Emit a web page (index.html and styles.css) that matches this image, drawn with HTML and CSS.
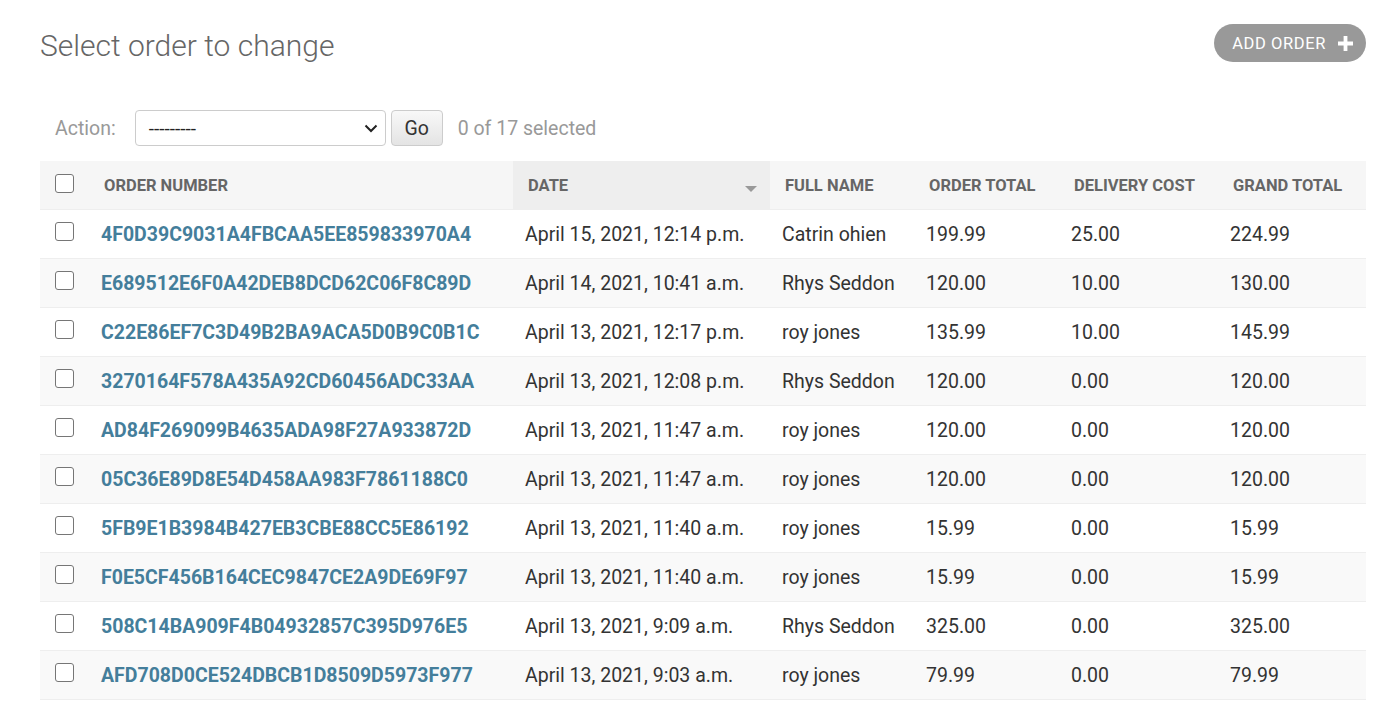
FILE: index.html
```html
<!DOCTYPE html>
<html lang="en">
<head>
<meta charset="utf-8">
<title>Select order to change</title>
<link rel="stylesheet" href="styles.css">
</head>
<body>
<div class="content">
  <div class="top">
    <h1 class="title">Select order to change</h1>
    <a class="addlink" href="#">ADD ORDER
      <svg class="plus" width="15" height="15" viewBox="0 0 15 15"><path d="M5.6 0h3.8v5.6H15v3.8H9.4V15H5.6V9.4H0V5.6h5.6z" fill="#fff"/></svg>
    </a>
  </div>
  <div class="actions">
    <span class="label">Action:</span>
    <div class="select">
      <span>---------</span>
      <svg width="14" height="9" viewBox="0 0 14 9"><path d="M1.5 1.5l5.5 5.5 5.5-5.5" fill="none" stroke="#222" stroke-width="2"/></svg>
    </div>
    <button class="go">Go</button>
    <span class="counter">0 of 17 selected</span>
  </div>
  <table class="result">
    <colgroup>
      <col class="c-check"><col class="c-num"><col class="c-date"><col class="c-name"><col class="c-total"><col class="c-deliv"><col class="c-grand">
    </colgroup>
    <thead>
      <tr>
        <th class="cb"><span class="box"></span></th>
        <th>ORDER NUMBER</th>
        <th class="sorted"><div class="sorthead"><span>DATE</span><span class="arrow"></span></div></th>
        <th>FULL NAME</th>
        <th>ORDER TOTAL</th>
        <th>DELIVERY COST</th>
        <th>GRAND TOTAL</th>
      </tr>
    </thead>
    <tbody>
      <tr><td class="cb"><span class="box"></span></td><td class="num"><a href="#">4F0D39C9031A4FBCAA5EE859833970A4</a></td><td>April 15, 2021, 12:14 p.m.</td><td>Catrin ohien</td><td>199.99</td><td>25.00</td><td>224.99</td></tr>
      <tr><td class="cb"><span class="box"></span></td><td class="num"><a href="#">E689512E6F0A42DEB8DCD62C06F8C89D</a></td><td>April 14, 2021, 10:41 a.m.</td><td>Rhys Seddon</td><td>120.00</td><td>10.00</td><td>130.00</td></tr>
      <tr><td class="cb"><span class="box"></span></td><td class="num"><a href="#">C22E86EF7C3D49B2BA9ACA5D0B9C0B1C</a></td><td>April 13, 2021, 12:17 p.m.</td><td>roy jones</td><td>135.99</td><td>10.00</td><td>145.99</td></tr>
      <tr><td class="cb"><span class="box"></span></td><td class="num"><a href="#">3270164F578A435A92CD60456ADC33AA</a></td><td>April 13, 2021, 12:08 p.m.</td><td>Rhys Seddon</td><td>120.00</td><td>0.00</td><td>120.00</td></tr>
      <tr><td class="cb"><span class="box"></span></td><td class="num"><a href="#">AD84F269099B4635ADA98F27A933872D</a></td><td>April 13, 2021, 11:47 a.m.</td><td>roy jones</td><td>120.00</td><td>0.00</td><td>120.00</td></tr>
      <tr><td class="cb"><span class="box"></span></td><td class="num"><a href="#">05C36E89D8E54D458AA983F7861188C0</a></td><td>April 13, 2021, 11:47 a.m.</td><td>roy jones</td><td>120.00</td><td>0.00</td><td>120.00</td></tr>
      <tr><td class="cb"><span class="box"></span></td><td class="num"><a href="#">5FB9E1B3984B427EB3CBE88CC5E86192</a></td><td>April 13, 2021, 11:40 a.m.</td><td>roy jones</td><td>15.99</td><td>0.00</td><td>15.99</td></tr>
      <tr><td class="cb"><span class="box"></span></td><td class="num"><a href="#">F0E5CF456B164CEC9847CE2A9DE69F97</a></td><td>April 13, 2021, 11:40 a.m.</td><td>roy jones</td><td>15.99</td><td>0.00</td><td>15.99</td></tr>
      <tr><td class="cb"><span class="box"></span></td><td class="num"><a href="#">508C14BA909F4B04932857C395D976E5</a></td><td>April 13, 2021, 9:09 a.m.</td><td>Rhys Seddon</td><td>325.00</td><td>0.00</td><td>325.00</td></tr>
      <tr><td class="cb"><span class="box"></span></td><td class="num"><a href="#">AFD708D0CE524DBCB1D8509D5973F977</a></td><td>April 13, 2021, 9:03 a.m.</td><td>roy jones</td><td>79.99</td><td>0.00</td><td>79.99</td></tr>
    </tbody>
  </table>
</div>
</body>
</html>
```
FILE: styles.css
```css
html, body {
  margin: 0;
  padding: 0;
  background: #fff;
}
body {
  font-family: Roboto, "Liberation Sans", sans-serif;
  color: #333;
  font-size: 19.5px;
}
.content {
  padding: 24px 30px 0 40px;
}
.top {
  display: flex;
  justify-content: space-between;
  align-items: flex-start;
  height: 76px;
}
.title {
  margin: 3px 0 0 0;
  font-size: 30px;
  font-weight: 300;
  color: #666;
  line-height: 38px;
}
.addlink {
  display: flex;
  align-items: center;
  gap: 12px;
  height: 38px;
  padding: 0 13px 0 18px;
  background: #999;
  border-radius: 19px;
  color: #fff;
  text-decoration: none;
  font-size: 16.5px;
  letter-spacing: 0.6px;
}
.plus { display: block; }
.actions {
  display: flex;
  align-items: center;
  height: 36px;
  padding: 10px 0 15px 15px;
}
.label {
  color: #999;
  margin-right: 19px;
}
.select {
  width: 251px;
  height: 36px;
  box-sizing: border-box;
  border: 1px solid #ccc;
  border-radius: 4px;
  display: flex;
  align-items: center;
  justify-content: space-between;
  padding: 0 7px 0 13px;
  color: #222;
  font-size: 19px;
}
.go {
  margin-left: 5px;
  width: 52px;
  height: 36px;
  border: 1px solid #ccc;
  border-radius: 4px;
  background: linear-gradient(#f8f8f8, #e4e4e4);
  font-family: inherit;
  font-size: 19.5px;
  color: #333;
  padding: 0;
}
.counter {
  margin-left: 15px;
  color: #999;
}
.result {
  width: 1326px;
  table-layout: fixed;
  border-collapse: collapse;
}
.c-check { width: 49px; }
.c-num { width: 424px; }
.c-date { width: 257px; }
.c-name { width: 144px; }
.c-total { width: 145px; }
.c-deliv { width: 159px; }
.c-grand { width: 148px; }
thead th {
  background: #f6f6f6;
  color: #666;
  font-size: 16.5px;
  font-weight: 700;
  text-align: left;
  height: 47px;
  padding: 1px 0 0 15px;
  border-bottom: 1px solid #eee;
  vertical-align: middle;
  white-space: nowrap;
}
thead th.sorted {
  background: #eee;
}
.sorthead {
  display: flex;
  justify-content: space-between;
  align-items: center;
  padding-right: 13px;
}
.arrow {
  width: 0;
  height: 0;
  border-left: 6px solid transparent;
  border-right: 6px solid transparent;
  border-top: 6px solid #999;
  margin-top: 6px;
}
.box {
  display: block;
  width: 17px;
  height: 17px;
  border: 1px solid #767676;
  border-radius: 3px;
  background: #fff;
}
thead th.cb {
  padding: 0 0 0 15px;
  height: 48px;
}
thead th.cb .box { margin-top: -3px; }
tbody td {
  height: 47px;
  padding: 1px 0 0 12px;
  border-bottom: 1px solid #eee;
  vertical-align: middle;
  white-space: nowrap;
}
tbody td.cb {
  height: 36px;
  padding: 12px 0 0 15px;
  vertical-align: top;
}
tbody tr:nth-child(even) td {
  background: #f9f9f9;
}
.num a {
  color: #447e9b;
  font-weight: 700;
  text-decoration: none;
}
```
